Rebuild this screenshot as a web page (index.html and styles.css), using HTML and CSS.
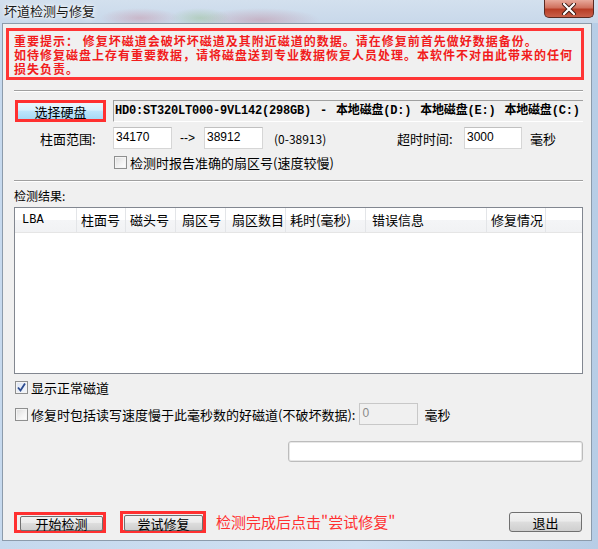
FILE: index.html
```html
<!DOCTYPE html>
<html lang="zh-CN">
<head>
  <meta charset="UTF-8" />
  <title>坏道检测与修复</title>
  <link rel="stylesheet" href="styles.css">
</head>
<body>
  <div class="window">
    <div class="titlebar">
      <span class="title">坏道检测与修复</span>
      <span class="close">
        <svg width="16" height="12" viewBox="0 0 16 12">
          <path d="M3 1 L13 11 M13 1 L3 11" stroke="#3a1a14" stroke-width="4" stroke-linecap="round"/>
          <path d="M3 1 L13 11 M13 1 L3 11" stroke="#fff" stroke-width="2.2" stroke-linecap="round"/>
        </svg>
      </span>
    </div>

    <div class="client">
      <div class="warning">
        <p>重要提示： 修复坏磁道会破坏坏磁道及其附近磁道的数据。请在修复前首先做好数据备份。</p>
        <p>如待修复磁盘上存有重要数据，请将磁盘送到专业数据恢复人员处理。本软件不对由此带来的任何</p>
        <p>损失负责。</p>
      </div>

      <div class="sep sep-a"></div>

      <div class="row row-disk">
        <span class="mark mark-disk"><span class="btn btn-hot">选择硬盘</span></span>
        <div class="disk">HD0:ST320LT000-9VL142(298GB) - 本地磁盘(D:) 本地磁盘(E:) 本地磁盘(C:)</div>
      </div>

      <div class="row row-range">
        <span class="lbl lbl-range">柱面范围:</span>
        <span class="field f-from">34170</span>
        <span class="arrow">--&gt;</span>
        <span class="field f-to">38912</span>
        <span class="hint">(0-38913)</span>
        <span class="lbl lbl-timeout">超时时间:</span>
        <span class="field f-timeout">3000</span>
        <span class="unit">毫秒</span>
      </div>

      <div class="row row-exact">
        <span class="check"></span>
        <span class="check-text">检测时报告准确的扇区号(速度较慢)</span>
      </div>

      <div class="sep sep-b"></div>

      <div class="result-title">检测结果:</div>

      <div class="list">
        <div class="list-head">
          <span class="col c-lba">LBA</span>
          <span class="col c-cyl">柱面号</span>
          <span class="col c-head">磁头号</span>
          <span class="col c-sec">扇区号</span>
          <span class="col c-cnt">扇区数目</span>
          <span class="col c-time">耗时(毫秒)</span>
          <span class="col c-err">错误信息</span>
          <span class="col c-fix">修复情况</span>
          <span class="col c-rest"></span>
        </div>
      </div>

      <div class="row row-normal">
        <span class="check checked">
          <svg width="11" height="11" viewBox="0 0 11 11">
            <path d="M2 5.5 L4.5 8.5 L9 1.5" fill="none" stroke="#2c4b8f" stroke-width="1.8"/>
          </svg>
        </span>
        <span class="check-text">显示正常磁道</span>
      </div>

      <div class="row row-slow">
        <span class="check"></span>
        <span class="check-text">修复时包括读写速度慢于此毫秒数的好磁道(不破坏数据):</span>
        <span class="field f-slow">0</span>
        <span class="unit unit-slow">毫秒</span>
      </div>

      <div class="row row-progress">
        <div class="progress"></div>
      </div>

      <div class="row row-buttons">
        <span class="mark mark-start"><span class="btn">开始检测</span></span>
        <span class="mark mark-repair"><span class="btn">尝试修复</span></span>
        <span class="note">检测完成后点击"尝试修复"</span>
        <span class="btn btn-exit">退出</span>
      </div>
    </div>
  </div>
</body>
</html>
```

FILE: styles.css
```css
body {
  margin: 0;
  font-family: "Noto Sans CJK SC", "Liberation Sans", sans-serif;
  font-size: 12px;
  color: #000;
}
.window {
  width: 598px;
  height: 549px;
  overflow: hidden;
  background: linear-gradient(90deg, #c6d9ee 0%, #cfe0f2 60%, #b7cde6 100%);
}
.titlebar {
  height: 23px;
  display: flex;
  justify-content: space-between;
  align-items: flex-start;
  background:
    radial-gradient(ellipse 40px 10px at 140px 18px, rgba(200, 120, 140, 0.35), transparent),
    radial-gradient(ellipse 30px 10px at 200px 18px, rgba(150, 190, 140, 0.45), transparent),
    radial-gradient(ellipse 60px 12px at 260px 20px, rgba(190, 110, 130, 0.35), transparent),
    linear-gradient(180deg, #d3e0ee 0%, #c8d8ea 100%);
}
.title {
  margin: 3px 0 0 4px;
  font-size: 13px;
  line-height: 16px;
  color: #1a1a1a;
  text-shadow: 0 0 6px #fff, 0 0 3px #fff;
}
.close {
  width: 48px;
  height: 17px;
  margin-right: 4px;
  display: flex;
  align-items: center;
  justify-content: center;
  border: 1px solid #5a2a22;
  border-top: none;
  border-radius: 0 0 5px 5px;
  background: linear-gradient(180deg, #e8a99b 0%, #d0715e 45%, #b83d26 55%, #c9604a 100%);
}
.client {
  margin: 0 6px 0 2px;
  height: 516px;
  border: 1px solid #8c9bab;
  background: #f0f0f0;
}
.warning {
  height: 52px;
  box-sizing: border-box;
  margin: 4px 7px 0 3px;
  padding: 2px 0 0 5px;
  border: 3px solid #ff3535;
  color: #f21c1c;
  font-weight: bold;
  letter-spacing: 1px;
}
.warning p {
  margin: 0;
  height: 14px;
  line-height: 15px;
  white-space: nowrap;
}
.sep {
  height: 0;
  margin-left: 11px;
  margin-right: 8px;
  border-top: 1px solid #a0a0a0;
  border-bottom: 1px solid #fff;
}
.sep-a {
  margin-top: 10px;
}
.row {
  display: flex;
  align-items: center;
}
.row-disk {
  margin-top: 8px;
  height: 22px;
  padding-left: 12px;
}
.mark {
  box-sizing: border-box;
  display: flex;
  border: 3px solid #ff3030;
  padding: 0;
}
.btn {
  box-sizing: border-box;
  display: flex;
  align-items: center;
  justify-content: center;
  border: 1px solid #707070;
  border-radius: 3px;
  background: linear-gradient(180deg, #f2f2f2 0%, #ebebeb 45%, #dddddd 50%, #cfcfcf 100%);
  font-size: 13px;
}
.mark-disk {
  width: 91px;
  height: 22px;
}
.btn-hot {
  width: 100%;
  height: 100%;
  border: none;
  border-radius: 0;
  background: linear-gradient(180deg, #eaf6fd 0%, #d9f0fc 45%, #bee6fd 50%, #a7d9f5 100%);
}
.disk {
  margin-left: 7px;
  width: 470px;
  height: 22px;
  box-sizing: border-box;
  padding-left: 1px;
  line-height: 21px;
  border-left: 1px solid #a0a0a0;
  border-top: 1px solid #a0a0a0;
  border-bottom: 1px solid #fff;
  background: #f0f0f0;
  font-family: "Liberation Mono", "Noto Sans CJK SC", monospace;
  font-weight: bold;
  font-size: 12px;
  letter-spacing: -0.2px;
  word-spacing: 2px;
  white-space: nowrap;
  overflow: hidden;
}
.row-range {
  margin-top: 5px;
  height: 22px;
}
.lbl {
  font-size: 13px;
}
.lbl-range {
  margin-left: 37px;
  width: 73px;
}
.field {
  box-sizing: border-box;
  height: 22px;
  padding-left: 2px;
  line-height: 19px;
  border: 1px solid #d6d6d6;
  border-top-color: #c0c0c0;
  background: #fff;
  font-family: "Liberation Sans", sans-serif;
  font-size: 12px;
}
.f-from,
.f-to {
  width: 59px;
}
.arrow {
  margin-left: 8px;
  width: 24px;
  font-family: "Liberation Sans", sans-serif;
  font-size: 12px;
}
.hint {
  margin-left: 11px;
  width: 123px;
  font-size: 12px;
}
.lbl-timeout {
  width: 67px;
}
.f-timeout {
  width: 58px;
}
.unit {
  margin-left: 8px;
  font-size: 13px;
}
.row-exact {
  margin-top: 6px;
  height: 15px;
  padding-left: 111px;
}
.check {
  box-sizing: border-box;
  width: 13px;
  height: 13px;
  display: flex;
  align-items: center;
  justify-content: center;
  border: 1px solid #8e8f8f;
  background: linear-gradient(135deg, #dcdcdc 0%, #f4f4f4 60%, #ffffff 100%);
  box-shadow: inset 0 0 0 1px #f4f4f4;
}
.check.checked {
  background: linear-gradient(135deg, #dde5f3 0%, #f2f6fc 100%);
}
.check-text {
  margin-left: 3px;
  font-size: 13px;
  line-height: 15px;
}
.sep-b {
  margin-top: 10px;
}
.result-title {
  margin: 7px 0 0 11px;
  line-height: 14px;
  font-size: 12px;
}
.list {
  box-sizing: border-box;
  margin: 4px 8px 0 11px;
  height: 167px;
  border: 1px solid #828790;
  background: #fff;
}
.list-head {
  display: flex;
  height: 24px;
  border-bottom: 1px solid #e5e5e5;
  background: linear-gradient(180deg, #ffffff 0%, #ffffff 50%, #f4f5f7 51%, #f1f2f4 100%);
}
.col {
  box-sizing: border-box;
  padding-left: 4px;
  line-height: 23px;
  font-size: 13px;
  border-right: 1px solid #e3e5e8;
  white-space: nowrap;
  overflow: hidden;
}
.c-lba {
  width: 62px;
  padding-left: 7px;
  padding-top: 1px;
  font-family: "Liberation Mono", monospace;
  font-size: 12px;
}
.c-cyl { width: 49px; }
.c-head { width: 50px; }
.c-sec { width: 50px; padding-left: 6px; }
.c-cnt { width: 60px; padding-left: 6px; }
.c-time { width: 80px; }
.c-err { width: 121px; padding-left: 6px; }
.c-fix { width: 59px; }
.c-rest { flex: 1; border-right: none; }
.row-normal {
  margin-top: 6px;
  height: 15px;
  padding-left: 12px;
}
.row-slow {
  margin-top: 8px;
  height: 22px;
  padding-left: 12px;
}
.f-slow {
  margin-left: 4px;
  width: 59px;
  border-color: #c8c8c8;
  background: #f0f0f0;
  color: #8a8a8a;
}
.unit-slow {
  margin-left: 6px;
}
.row-progress {
  margin-top: 16px;
  padding-left: 285px;
}
.progress {
  box-sizing: border-box;
  width: 295px;
  height: 21px;
  border: 1px solid #bcbcbc;
  border-radius: 3px;
  background: #fff;
  box-shadow: inset 0 0 0 1px #e8e8e8;
}
.row-buttons {
  margin-top: 49px;
  height: 22px;
  padding-left: 11px;
}
.mark-start {
  width: 92px;
  height: 21px;
  padding: 1px 0 0 3px;
}
.mark-start .btn {
  width: 84px;
  height: 15px;
  border-radius: 2px;
}
.mark-repair {
  margin-left: 14px;
  width: 86px;
  height: 22px;
  padding: 1px 0 0 1px;
}
.mark-repair .btn {
  width: 80px;
  height: 16px;
  border-radius: 2px;
}
.note {
  margin-left: 10px;
  width: 293px;
  color: #ff3030;
  font-size: 15px;
  line-height: 18px;
}
.btn-exit {
  width: 73px;
  height: 20px;
}
```
